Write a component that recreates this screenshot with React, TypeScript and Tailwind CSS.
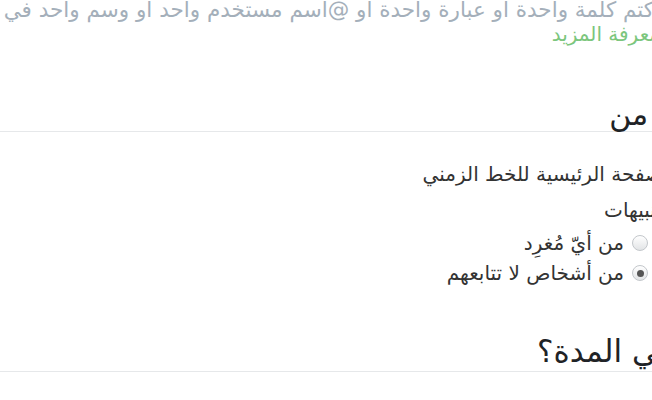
export default function App() {
  return (
    <div className="h-[400px] w-[652px] overflow-hidden bg-white">
      <div
        dir="rtl"
        className="ml-[-320px] mr-[-8px] font-['DejaVu_Sans',sans-serif]"
      >
        <p className="mt-[-3px] whitespace-nowrap text-[21.5px] leading-[25px] text-[#a4afba]">
          اكتم كلمة واحدة او عبارة واحدة او @اسم مستخدم واحد او وسم واحد في كل مرة.
        </p>
        <a href="#" className="block text-[20px] leading-[25px] text-[#7cc67d]">
          معرفة المزيد
        </a>

        <h2 className="mr-[-41px] mt-[52px] border-b border-[#e6e8ea] text-[30px] leading-[32px] text-[#1f2326]">
          كتم من
        </h2>

        <ul className="mt-[24px] flex flex-col text-[20px] text-[#333]">
          <li className="mr-[-14px] flex items-center gap-2 leading-[36px]">
            الصفحة الرئيسية للخط الزمني
          </li>
          <li className="mr-[-14px] flex items-center gap-2 leading-[36px]">
            التنبيهات
          </li>
          <li className="mr-[12px] flex items-center gap-[8px] leading-[30px]">
            <Radio />
            <span>من أيّ مُغرِد</span>
          </li>
          <li className="mr-[12px] flex items-center gap-[8px] leading-[30px]">
            <Radio checked />
            <span>من أشخاص لا تتابعهم</span>
          </li>
        </ul>

        <h2 className="mr-[-50px] mt-[47px] border-b border-[#e6e8ea] pb-[4px] text-[31px] leading-[32px] text-[#1f2326]">
          ما هي المدة؟
        </h2>
      </div>
    </div>
  );
}

function Radio({ checked = false }: { checked?: boolean }) {
  return (
    <span className="flex h-[16px] w-[16px] shrink-0 items-center justify-center rounded-full border border-[#c3c7cb] bg-gradient-to-b from-white to-[#e2e4e6]">
      {checked && <span className="h-[7px] w-[7px] rounded-full bg-[#555]" />}
    </span>
  );
}
